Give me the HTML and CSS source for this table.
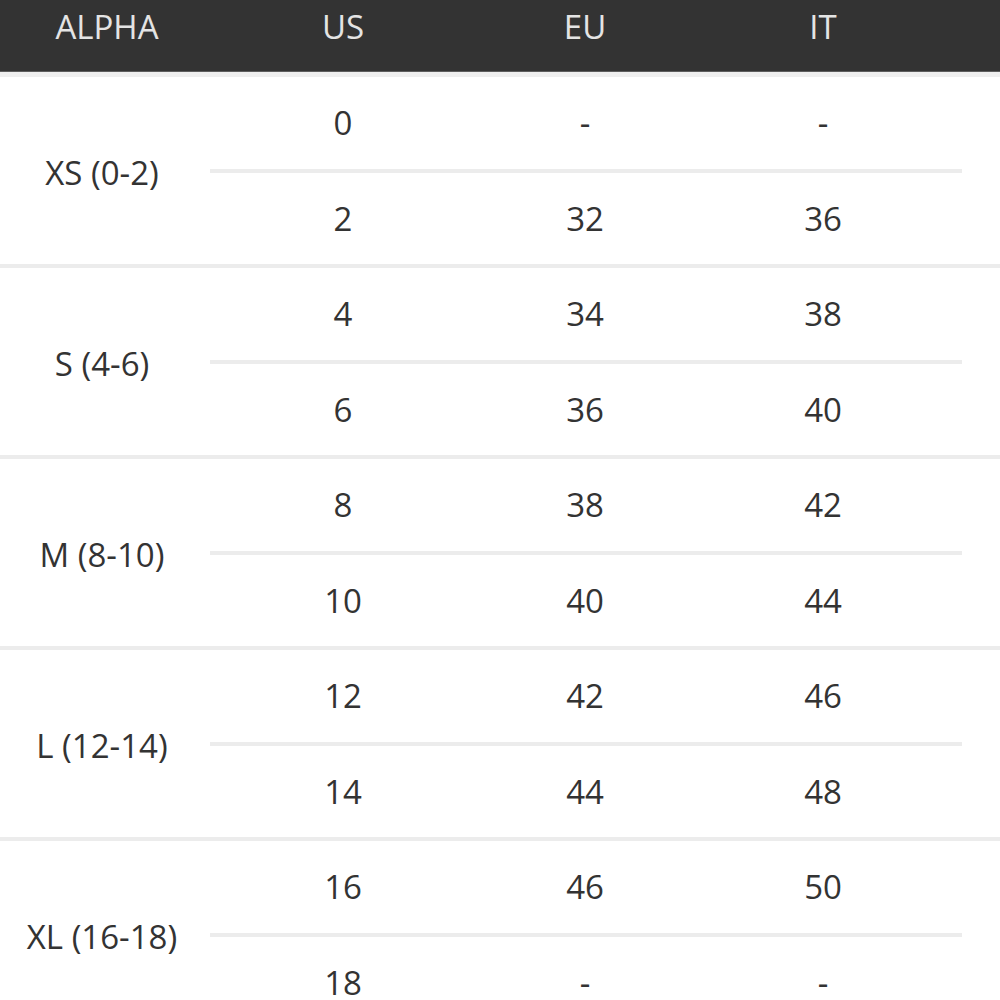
FILE: index.html
```html
<!DOCTYPE html>
<html lang="en">
<head>
<meta charset="utf-8">
<title>Size chart</title>
<link rel="stylesheet" href="styles.css">
</head>
<body>
<div class="chart">
  <div class="head">
    <div class="hcell alpha">ALPHA</div>
    <div class="hcell">US</div>
    <div class="hcell">EU</div>
    <div class="hcell">IT</div>
  </div>
  <div class="head-rule"></div>

  <div class="group">
    <div class="alpha-cell">XS (0-2)</div>
    <div class="cell">0</div><div class="cell">-</div><div class="cell">-</div>
    <div class="inner-rule"></div>
    <div class="cell">2</div><div class="cell">32</div><div class="cell">36</div>
  </div>
  <div class="group">
    <div class="alpha-cell">S (4-6)</div>
    <div class="cell">4</div><div class="cell">34</div><div class="cell">38</div>
    <div class="inner-rule"></div>
    <div class="cell">6</div><div class="cell">36</div><div class="cell">40</div>
  </div>
  <div class="group">
    <div class="alpha-cell">M (8-10)</div>
    <div class="cell">8</div><div class="cell">38</div><div class="cell">42</div>
    <div class="inner-rule"></div>
    <div class="cell">10</div><div class="cell">40</div><div class="cell">44</div>
  </div>
  <div class="group">
    <div class="alpha-cell">L (12-14)</div>
    <div class="cell">12</div><div class="cell">42</div><div class="cell">46</div>
    <div class="inner-rule"></div>
    <div class="cell">14</div><div class="cell">44</div><div class="cell">48</div>
  </div>
  <div class="group">
    <div class="alpha-cell">XL (16-18)</div>
    <div class="cell">16</div><div class="cell">46</div><div class="cell">50</div>
    <div class="inner-rule"></div>
    <div class="cell">18</div><div class="cell">-</div><div class="cell">-</div>
  </div>
</div>
</body>
</html>
```

FILE: styles.css
```css
html, body {
  margin: 0;
  padding: 0;
  height: 1000px;
  overflow: hidden;
  background: #ffffff;
}

.chart {
  font-family: "Open Sans", "Noto Sans", sans-serif;
  font-size: 33px;
  color: #333333;
}

.head {
  display: grid;
  grid-template-columns: 204px 278px 206px 270px 1fr;
  height: 71px;
  background: #333333;
  border-bottom: 1px solid #5e5e5e;
  color: #e4e4e4;
}

.hcell {
  text-align: center;
  line-height: 33px;
  padding-top: 10px;
}

.hcell.alpha {
  padding-left: 10px;
}

.head-rule {
  height: 5px;
  background: #efefef;
}

.group {
  display: grid;
  grid-template-columns: 204px 278px 206px 270px 1fr;
  grid-template-rows: 91.5px 4px 91.5px;
  border-bottom: 4px solid #ececec;
}

.alpha-cell {
  grid-column: 1;
  grid-row: 1 / span 3;
  display: flex;
  align-items: center;
  justify-content: center;
  padding-top: 4px;
  white-space: nowrap;
}

.cell {
  display: flex;
  align-items: center;
  justify-content: center;
}

.group .cell:nth-child(2),
.group .cell:nth-child(6) { grid-column: 2; }
.group .cell:nth-child(3),
.group .cell:nth-child(7) { grid-column: 3; }
.group .cell:nth-child(4),
.group .cell:nth-child(8) { grid-column: 4; }

.inner-rule {
  grid-column: 2 / span 4;
  grid-row: 2;
  margin-left: 6px;
  width: 752px;
  background: #ececec;
}
```
